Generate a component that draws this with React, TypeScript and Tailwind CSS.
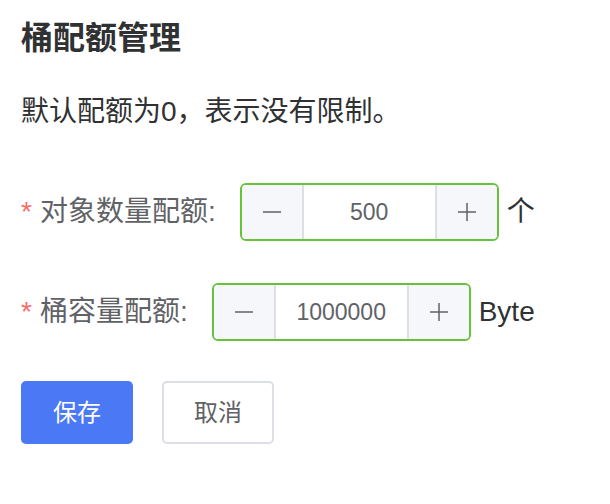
const font = "font-['Liberation_Sans','Noto_Sans_CJK_SC',sans-serif]"

function MinusIcon() {
  return (
    <svg width="20" height="20" viewBox="0 0 20 20" fill="none" stroke="currentColor" strokeWidth="1.5">
      <line x1="1" y1="10" x2="19" y2="10" />
    </svg>
  )
}

function PlusIcon() {
  return (
    <svg width="20" height="20" viewBox="0 0 20 20" fill="none" stroke="currentColor" strokeWidth="1.5">
      <line x1="1" y1="10" x2="19" y2="10" />
      <line x1="10" y1="1" x2="10" y2="19" />
    </svg>
  )
}

function QuotaInput({ value }: { value: string }) {
  return (
    <div className="flex h-[58px] w-[259px] overflow-hidden rounded-[6px] border-2 border-[#67c23a] bg-white">
      <div className="flex w-[62px] items-center justify-center border-r-2 border-[#dcdfe6] bg-[#f5f7fa] text-[#606266]">
        <MinusIcon />
      </div>
      <div className="flex flex-1 items-center justify-center text-[23px] text-[#606266]">{value}</div>
      <div className="flex w-[62px] items-center justify-center border-l-2 border-[#dcdfe6] bg-[#f5f7fa] text-[#606266]">
        <PlusIcon />
      </div>
    </div>
  )
}

function QuotaRow({ label, value, unit }: { label: string; value: string; unit: string }) {
  return (
    <div className="flex h-[58px] items-center">
      <div className="mr-[24px] flex items-center text-[28px] leading-none text-[#606266]">
        <span className="mr-[8px] text-[#f56c6c]">*</span>
        <span>{label}</span>
      </div>
      <QuotaInput value={value} />
      <span className="ml-[8px] text-[28px] leading-none text-[#303133]">{unit}</span>
    </div>
  )
}

export default function App() {
  return (
    <div className={`${font} min-h-screen w-full bg-white px-[21px] pt-[18px]`}>
      <h1 className="h-[40px] text-[32px] font-bold leading-[40px] text-[#303133]">桶配额管理</h1>
      <p className="mt-[34px] h-[40px] text-[28px] leading-[40px] text-[#303133]">默认配额为0，表示没有限制。</p>

      <div className="mt-[51px] flex flex-col gap-[42px]">
        <QuotaRow label="对象数量配额:" value="500" unit="个" />
        <QuotaRow label="桶容量配额:" value="1000000" unit="Byte" />
      </div>

      <div className="mt-[40px] flex gap-[29px]">
        <button className="h-[63px] w-[112px] rounded-[5px] bg-[#4b79f6] text-[24px] text-white">保存</button>
        <button className="h-[63px] w-[112px] rounded-[5px] border-2 border-[#dcdfe6] bg-white text-[24px] text-[#606266]">取消</button>
      </div>
    </div>
  )
}
